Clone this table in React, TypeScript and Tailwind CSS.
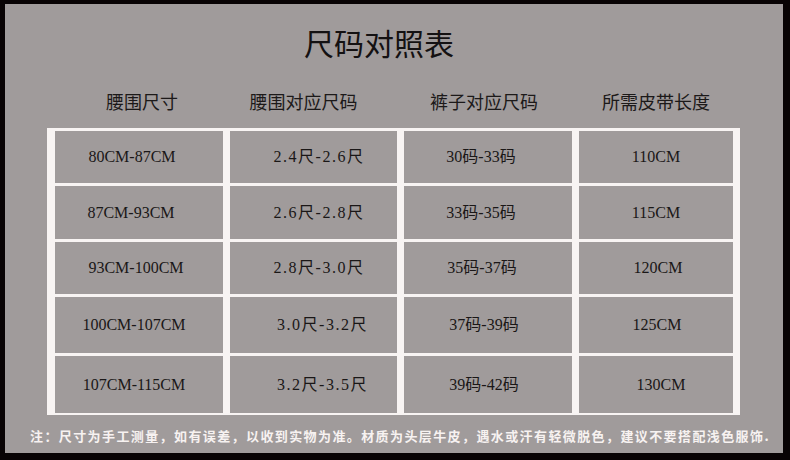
import React from "react";

const serif = { fontFamily: '"Liberation Serif", "Noto Sans CJK SC", serif' };

type Cell = { text: string; shift: string };

// column offsets roughly follow the picture (text is not exactly centered)
const rows: Cell[][] = [
    [
        { text: "80CM-87CM", shift: "pr-[14px]" },
        { text: "2.4尺-2.6尺", shift: "pl-[11px] tracking-[1.5px]" },
        { text: "30码-33码", shift: "pr-[14px]" },
        { text: "110CM", shift: "" },
    ],
    [
        { text: "87CM-93CM", shift: "pr-[16px]" },
        { text: "2.6尺-2.8尺", shift: "pl-[11px] tracking-[1.5px]" },
        { text: "33码-35码", shift: "pr-[14px]" },
        { text: "115CM", shift: "" },
    ],
    [
        { text: "93CM-100CM", shift: "pr-[6px]" },
        { text: "2.8尺-3.0尺", shift: "pl-[11px] tracking-[1.5px]" },
        { text: "35码-37码", shift: "pr-[12px]" },
        { text: "120CM", shift: "pl-[4px]" },
    ],
    [
        { text: "100CM-107CM", shift: "pr-[10px]" },
        { text: "3.0尺-3.2尺", shift: "pl-[18px] tracking-[1.5px]" },
        { text: "37码-39码", shift: "pr-[8px]" },
        { text: "125CM", shift: "pl-[2px]" },
    ],
    [
        { text: "107CM-115CM", shift: "pr-[10px]" },
        { text: "3.2尺-3.5尺", shift: "pl-[18px] tracking-[1.5px]" },
        { text: "39码-42码", shift: "pr-[8px]" },
        { text: "130CM", shift: "pl-[10px]" },
    ],
];

const headers = [
    { text: "腰围尺寸", shift: "pl-[6px]" },
    { text: "腰围对应尺码", shift: "pr-[20px]" },
    { text: "裤子对应尺码", shift: "pr-[8px]" },
    { text: "所需皮带长度", shift: "" },
];

export default function App() {
    return (
        <div className="w-[790px] h-[460px] bg-[#080304] pt-[4px] pl-[5px]">
            <div
                className="w-[778px] h-[449px] bg-[#a09b9b] flex flex-col"
                style={{ fontFamily: '"Noto Sans CJK SC", sans-serif' }}
            >
                {/* Title */}
                <div className="pt-[23px] pr-[30px] text-center text-[30px] leading-[30px] text-[#141112]">
                    尺码对照表
                </div>

                {/* Column headers */}
                <div className="mt-[35px] ml-[50px] grid grid-cols-[168px_167px_168px_154px] gap-x-[7px] text-[18px] leading-[18px] text-[#1c1919]">
                    {headers.map((h) => (
                        <div key={h.text} className={`text-center ${h.shift}`}>
                            {h.text}
                        </div>
                    ))}
                </div>

                {/* Table */}
                <div className="mt-[18px] ml-[42px] w-[693px] bg-[#f8f4f3] pt-[3px] pl-[8px] pr-[7px] pb-[2px] grid grid-cols-[168px_167px_168px_154px] grid-rows-[52px_53px_52px_56px_57px] gap-x-[7px] gap-y-[3px]">
                    {rows.map((row, i) =>
                        row.map((c, j) => (
                            <div
                                key={`${i}-${j}`}
                                className={`bg-[#a09b9b] flex items-center justify-center text-[16px] text-[#1a1717] ${c.shift}`}
                                style={serif}
                            >
                                {c.text}
                            </div>
                        ))
                    )}
                </div>

                {/* Note */}
                <div className="mt-[13px] ml-[25px] text-[13px] leading-[15px] font-bold tracking-[1.4px] text-[#f7f2f1] whitespace-nowrap">
                    注：尺寸为手工测量，如有误差，以收到实物为准。材质为头层牛皮，遇水或汗有轻微脱色，建议不要搭配浅色服饰.
                </div>
            </div>
        </div>
    );
}
